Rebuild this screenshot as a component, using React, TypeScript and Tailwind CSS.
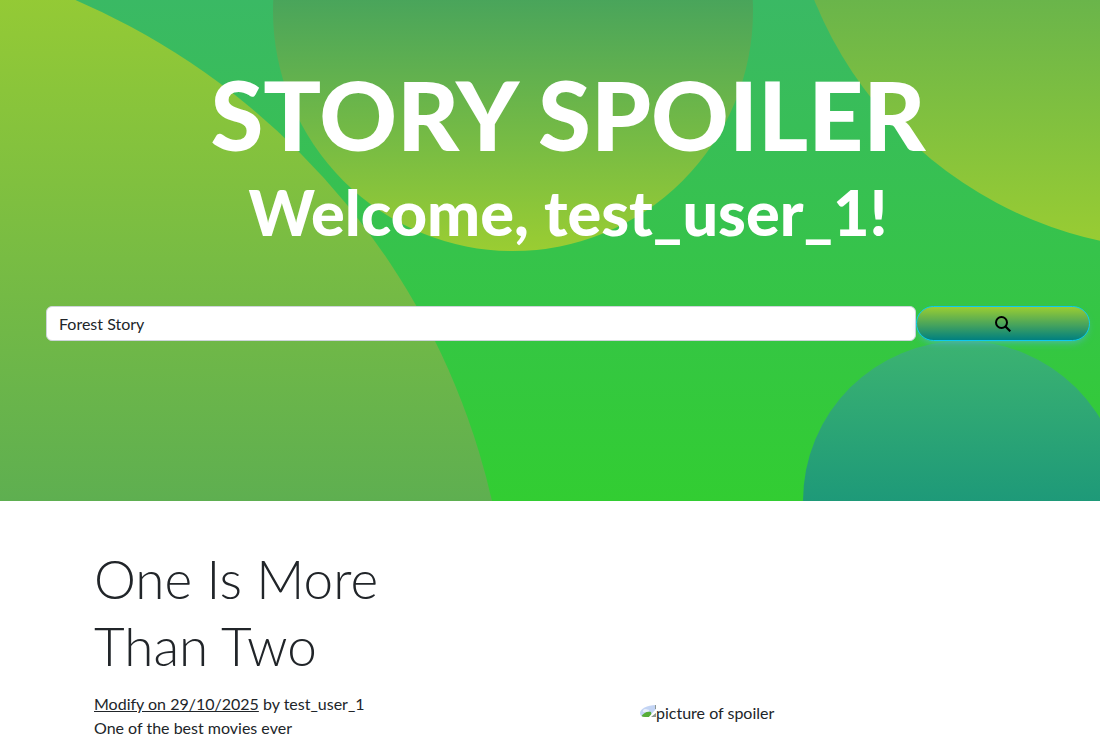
import { useState } from "react";

function HeroCircles() {
  return (
    <div aria-hidden="true" className="pointer-events-none absolute inset-0 overflow-hidden">
      <div className="absolute -bottom-[880px] -left-[930px] size-[1440px] rounded-full bg-linear-to-b/srgb from-[#9acd32] to-[#008080]" />
      <div className="absolute -top-[550px] -right-[485px] size-[800px] rounded-full bg-linear-to-t/srgb from-[#9acd32] to-[#008080]" />
      <div className="absolute -bottom-[160px] -right-[23px] size-[320px] rounded-full bg-linear-to-b/srgb from-[#3cb371] to-[#008080]" />
      <div className="absolute -top-[229px] right-[347px] size-[480px] rounded-full bg-linear-to-t/srgb from-[#9acd32] to-[#008080]" />
    </div>
  );
}

function SearchIcon() {
  return (
    <svg aria-hidden="true" viewBox="0 0 16 16" className="size-4" fill="none" stroke="currentColor" strokeWidth="2">
      <circle cx="6.5" cy="6.5" r="5.5" />
      <path d="M10.5 10.5 15.3 15.3" strokeWidth="2.2" />
    </svg>
  );
}

function MissingPicture() {
  return (
    <svg aria-hidden="true" viewBox="0 0 16 16" className="size-4 shrink-0">
      <defs>
        <clipPath id="picture-edge">
          <path d="M0 8C0 4 7 0 16 0V12H5C2 12 0 10.500 0 8Z" />
        </clipPath>
      </defs>
      <g clipPath="url(#picture-edge)">
        <path d="M0 0H16V13H0Z" fill="#c3d4f4" />
        <path d="M3 6C3 4 6 3.500 7 4.500C9 4 10 6 8 7H3Z" fill="#fff" opacity=".6" />
        <path d="M1 12C3 8 7 6 11 7L12 12Z" fill="#57ad38" />
        <path d="M8 13 16 4V8L12 13Z" fill="#fff" />
        <path d="M11 12 16 8V12Z" fill="#8c9791" />
        <path d="M15 0H16V4H15Z" fill="#8c9791" />
      </g>
    </svg>
  );
}

export default function App() {
  const [query, setQuery] = useState("Forest Story");

  return (
    <div className="min-h-screen overflow-x-hidden bg-white font-['Lato',sans-serif] text-base text-[#212529]">
      <header className="relative bg-linear-to-b/srgb from-[#3ab964] to-[#32cd32] pt-[54px] pr-[10px] pb-40 pl-[46px]">
        <HeroCircles />
        <div className="relative">
          <div className="text-center font-black text-white">
            <h1 className="text-[96px] leading-[119px] whitespace-nowrap">STORY SPOILER</h1>
            <h2 className="text-[63px] leading-[77px] whitespace-nowrap">Welcome, test_user_1!</h2>
          </div>
          <form className="mt-14 grid grid-cols-[5fr_1fr]" onSubmit={(event) => event.preventDefault()}>
            <input
              type="search"
              aria-label="Search stories"
              value={query}
              onChange={(event) => setQuery(event.target.value)}
              className="h-[35px] min-w-0 rounded-md border border-[#ced4da] bg-white px-3 outline-none"
            />
            <button
              type="submit"
              aria-label="Search"
              className="flex h-[35px] items-center justify-center rounded-full border border-[#0dcaf0] bg-linear-to-b/srgb from-[#9acd32] to-[#008080] text-black shadow-[0_4px_9px_-4px_#54b4d3]"
            >
              <SearchIcon />
            </button>
          </form>
        </div>
      </header>
      <main className="grid grid-cols-2 items-center">
        <article className="pt-11 pl-[94px]">
          <h2 className="max-w-[320px] text-[53px] leading-[67px] font-light">
            One Is More Than Two
          </h2>
          <p className="mt-[13px] leading-6">
            <a href="#modify" className="underline">Modify on 29/10/2025</a> by test_user_1
          </p>
          <p className="leading-6">One of the best movies ever</p>
        </article>
        <div role="img" aria-label="picture of spoiler" className="mt-[184px] ml-[90px] flex items-center">
          <MissingPicture />
          <span>picture of spoiler</span>
        </div>
      </main>
    </div>
  );
}
